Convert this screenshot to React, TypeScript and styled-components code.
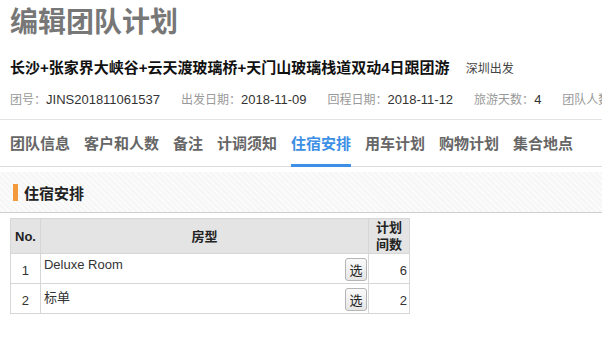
import styled, { createGlobalStyle } from "styled-components";

const GlobalStyle = createGlobalStyle`
  body {
    margin: 0;
    background: #fff;
    font-family: "Liberation Sans", "Noto Sans CJK SC", sans-serif;
    color: #333;
  }
`;

const Page = styled.div`
  padding: 0 0 0 10px;
  width: 602px;
  box-sizing: border-box;
  overflow: hidden;
`;

const Title = styled.h1`
  margin: 0;
  padding-top: 6px;
  font-size: 28px;
  line-height: 34px;
  font-weight: bold;
  color: #777;
`;

const TourLine = styled.div`
  margin-top: 16px;
  display: flex;
  align-items: baseline;
  gap: 16px;
  white-space: nowrap;
`;

const TourName = styled.span`
  font-size: 15px;
  font-weight: bold;
  color: #111;
`;

const Departure = styled.span`
  font-size: 12px;
  color: #444;
`;

const InfoBar = styled.div`
  margin-top: 14px;
  margin-left: -10px;
  padding: 0 0 10px 10px;
  display: flex;
  gap: 21px;
  font-size: 12px;
  line-height: 18px;
  white-space: nowrap;
  border-bottom: 1px solid #e3e3e3;
`;

const InfoItem = styled.span`
  color: #999;
  b {
    font-weight: normal;
    font-size: 13px;
    color: #333;
  }
`;

const Tabs = styled.div`
  margin-left: -10px;
  padding-left: 10px;
  display: flex;
  gap: 14px;
  border-bottom: 1px solid #ddd;
`;

const Tab = styled.div<{ $active?: boolean }>`
  padding: 14px 0 10px;
  font-size: 15px;
  line-height: 20px;
  font-weight: bold;
  color: ${(p) => (p.$active ? "#3c8fe4" : "#666")};
  border-bottom: 3px solid ${(p) => (p.$active ? "#3c8fe4" : "transparent")};
  margin-bottom: -1px;
`;

const SectionHead = styled.div`
  margin: 5px 0 0 -10px;
  padding: 0 0 0 13px;
  height: 40px;
  display: flex;
  align-items: center;
  gap: 6px;
  background: repeating-linear-gradient(
    45deg,
    #f6f6f6 0px,
    #f6f6f6 2px,
    #fbfbfb 2px,
    #fbfbfb 4px
  );
  border-bottom: 1px solid #cfcfcf;
`;

const Marker = styled.span`
  width: 5px;
  height: 17px;
  background: #f39a3c;
`;

const SectionTitle = styled.span`
  font-size: 15px;
  font-weight: bold;
  color: #222;
`;

const Table = styled.table`
  margin-top: 5px;
  border-collapse: collapse;
  width: 400px;
  font-size: 13px;
  th,
  td {
    border: 1px solid #d6d6d6;
  }
`;

const Th = styled.th`
  background: #e4e4e4;
  font-weight: bold;
  font-size: 13px;
  color: #222;
  height: 32px;
  padding: 0 4px;
  line-height: 17px;
`;

const Row = styled.tr`
  height: 30px;
`;

const NoCell = styled.td`
  width: 23px;
  text-align: center;
  color: #333;
  padding-top: 4px;
`;

const TypeCell = styled.td`
  padding: 0 1px 0 3px;
`;

const TypeInner = styled.div`
  display: flex;
  justify-content: space-between;
  align-items: flex-start;
  color: #333;
  span {
    margin-top: 1px;
  }
`;

const PickButton = styled.button`
  width: 22px;
  height: 23px;
  padding: 0;
  margin-top: 2px;
  font-size: 13px;
  font-family: inherit;
  color: #222;
  background: linear-gradient(#fafafa, #e6e6e6);
  border: 1px solid #b5b5b5;
  border-radius: 3px;
`;

const CountCell = styled.td`
  text-align: right;
  padding: 4px 2px 0 0;
  color: #333;
  width: 38px;
`;

const tabs = ["团队信息", "客户和人数", "备注", "计调须知", "住宿安排", "用车计划", "购物计划", "集合地点"];

const rooms = [
  { no: 1, name: "Deluxe Room", count: 6 },
  { no: 2, name: "标单", count: 2 },
];

export default function App() {
  return (
    <Page>
      <GlobalStyle />
      <Title>编辑团队计划</Title>
      <TourLine>
        <TourName>长沙+张家界大峡谷+云天渡玻璃桥+天门山玻璃栈道双动4日跟团游</TourName>
        <Departure>深圳出发</Departure>
      </TourLine>
      <InfoBar>
        <InfoItem>
          团号：<b>JINS201811061537</b>
        </InfoItem>
        <InfoItem>
          出发日期：<b>2018-11-09</b>
        </InfoItem>
        <InfoItem>
          回程日期：<b>2018-11-12</b>
        </InfoItem>
        <InfoItem>
          旅游天数：<b>4</b>
        </InfoItem>
        <InfoItem>团队人数：</InfoItem>
      </InfoBar>
      <Tabs>
        {tabs.map((t) => (
          <Tab key={t} $active={t === "住宿安排"}>
            {t}
          </Tab>
        ))}
      </Tabs>
      <SectionHead>
        <Marker />
        <SectionTitle>住宿安排</SectionTitle>
      </SectionHead>
      <Table>
        <thead>
          <tr>
            <Th>No.</Th>
            <Th>房型</Th>
            <Th>
              计划
              <br />
              间数
            </Th>
          </tr>
        </thead>
        <tbody>
          {rooms.map((r) => (
            <Row key={r.no}>
              <NoCell>{r.no}</NoCell>
              <TypeCell>
                <TypeInner>
                  <span>{r.name}</span>
                  <PickButton>选</PickButton>
                </TypeInner>
              </TypeCell>
              <CountCell>{r.count}</CountCell>
            </Row>
          ))}
        </tbody>
      </Table>
    </Page>
  );
}
